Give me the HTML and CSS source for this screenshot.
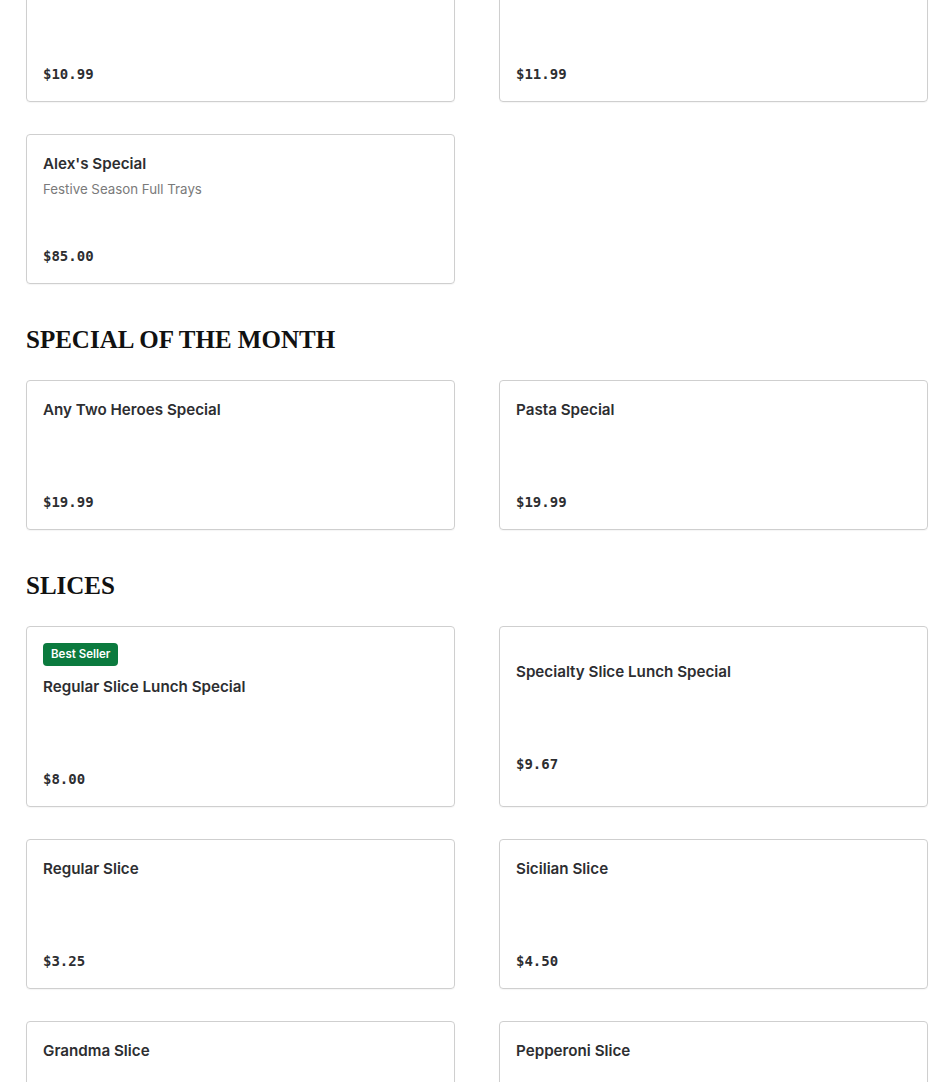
FILE: index.html
```html
<!DOCTYPE html>
<html>
<head>
<meta charset="utf-8">
<link rel="stylesheet" href="styles.css">
</head>
<body>
<main class="menu">
  <section class="section section-first">
    <div class="grid">
      <div class="card"><div class="info"><div class="title"></div><div class="price">$10.99</div></div></div>
      <div class="card"><div class="info"><div class="title"></div><div class="price">$11.99</div></div></div>
      <div class="card"><div class="info"><div class="title">Alex's Special</div><div class="desc">Festive Season Full Trays</div><div class="price">$85.00</div></div></div>
    </div>
  </section>
  <section class="section">
    <h2 class="heading">SPECIAL OF THE MONTH</h2>
    <div class="grid">
      <div class="card"><div class="info"><div class="title">Any Two Heroes Special</div><div class="price">$19.99</div></div></div>
      <div class="card"><div class="info"><div class="title">Pasta Special</div><div class="price">$19.99</div></div></div>
    </div>
  </section>
  <section class="section">
    <h2 class="heading">SLICES</h2>
    <div class="grid">
      <div class="card"><div class="badge">Best Seller</div><div class="info"><div class="title">Regular Slice Lunch Special</div><div class="price">$8.00</div></div></div>
      <div class="card"><div class="info"><div class="title">Specialty Slice Lunch Special</div><div class="price">$9.67</div></div></div>
      <div class="card"><div class="info"><div class="title">Regular Slice</div><div class="price">$3.25</div></div></div>
      <div class="card"><div class="info"><div class="title">Sicilian Slice</div><div class="price">$4.50</div></div></div>
      <div class="card"><div class="info"><div class="title">Grandma Slice</div><div class="price"></div></div></div>
      <div class="card"><div class="info"><div class="title">Pepperoni Slice</div><div class="price"></div></div></div>
    </div>
  </section>
</main>
</body>
</html>
```
FILE: styles.css
```css
html, body {
  margin: 0;
  padding: 0;
  background: #ffffff;
  overflow: hidden;
}
.menu {
  padding: 0 22px 0 26px;
  font-family: Inter, "Liberation Sans", sans-serif;
  color: #2d2e31;
}
.section-first {
  margin-top: -48px;
}
.heading {
  margin: 40px 0 24px;
  font-family: "Liberation Serif", "DejaVu Serif", serif;
  font-weight: 700;
  font-size: 25px;
  line-height: 32px;
  color: #111111;
}
.grid {
  display: grid;
  grid-template-columns: 1fr 1fr;
  column-gap: 44px;
  row-gap: 32px;
}
.card {
  border: 1px solid #cfcfcf;
  border-radius: 4px;
  padding: 16px;
  display: flex;
  flex-direction: column;
  justify-content: center;
  box-shadow: 0 1px 1px rgba(0,0,0,0.04);
}
.badge {
  align-self: flex-start;
  background: #0b7a3e;
  color: #ffffff;
  font-size: 11.5px;
  font-weight: 600;
  line-height: 15px;
  padding: 4px 8px;
  border-radius: 4px;
  margin-bottom: 8px;
}
.info {
  display: flex;
  flex-direction: column;
  min-height: 116px;
}
.title {
  font-size: 15.2px;
  font-weight: 600;
  line-height: 24px;
  min-height: 24px;
  padding-top: 1px;
}
.desc {
  font-size: 13.3px;
  line-height: 20px;
  color: #7a7a7a;
  margin-top: 3px;
}
.price {
  margin-top: auto;
  font-family: "DejaVu Sans Mono", "Liberation Mono", monospace;
  font-size: 14px;
  font-weight: 700;
  line-height: 22px;
  padding-top: 2px;
  color: #2d2e31;
}
```
